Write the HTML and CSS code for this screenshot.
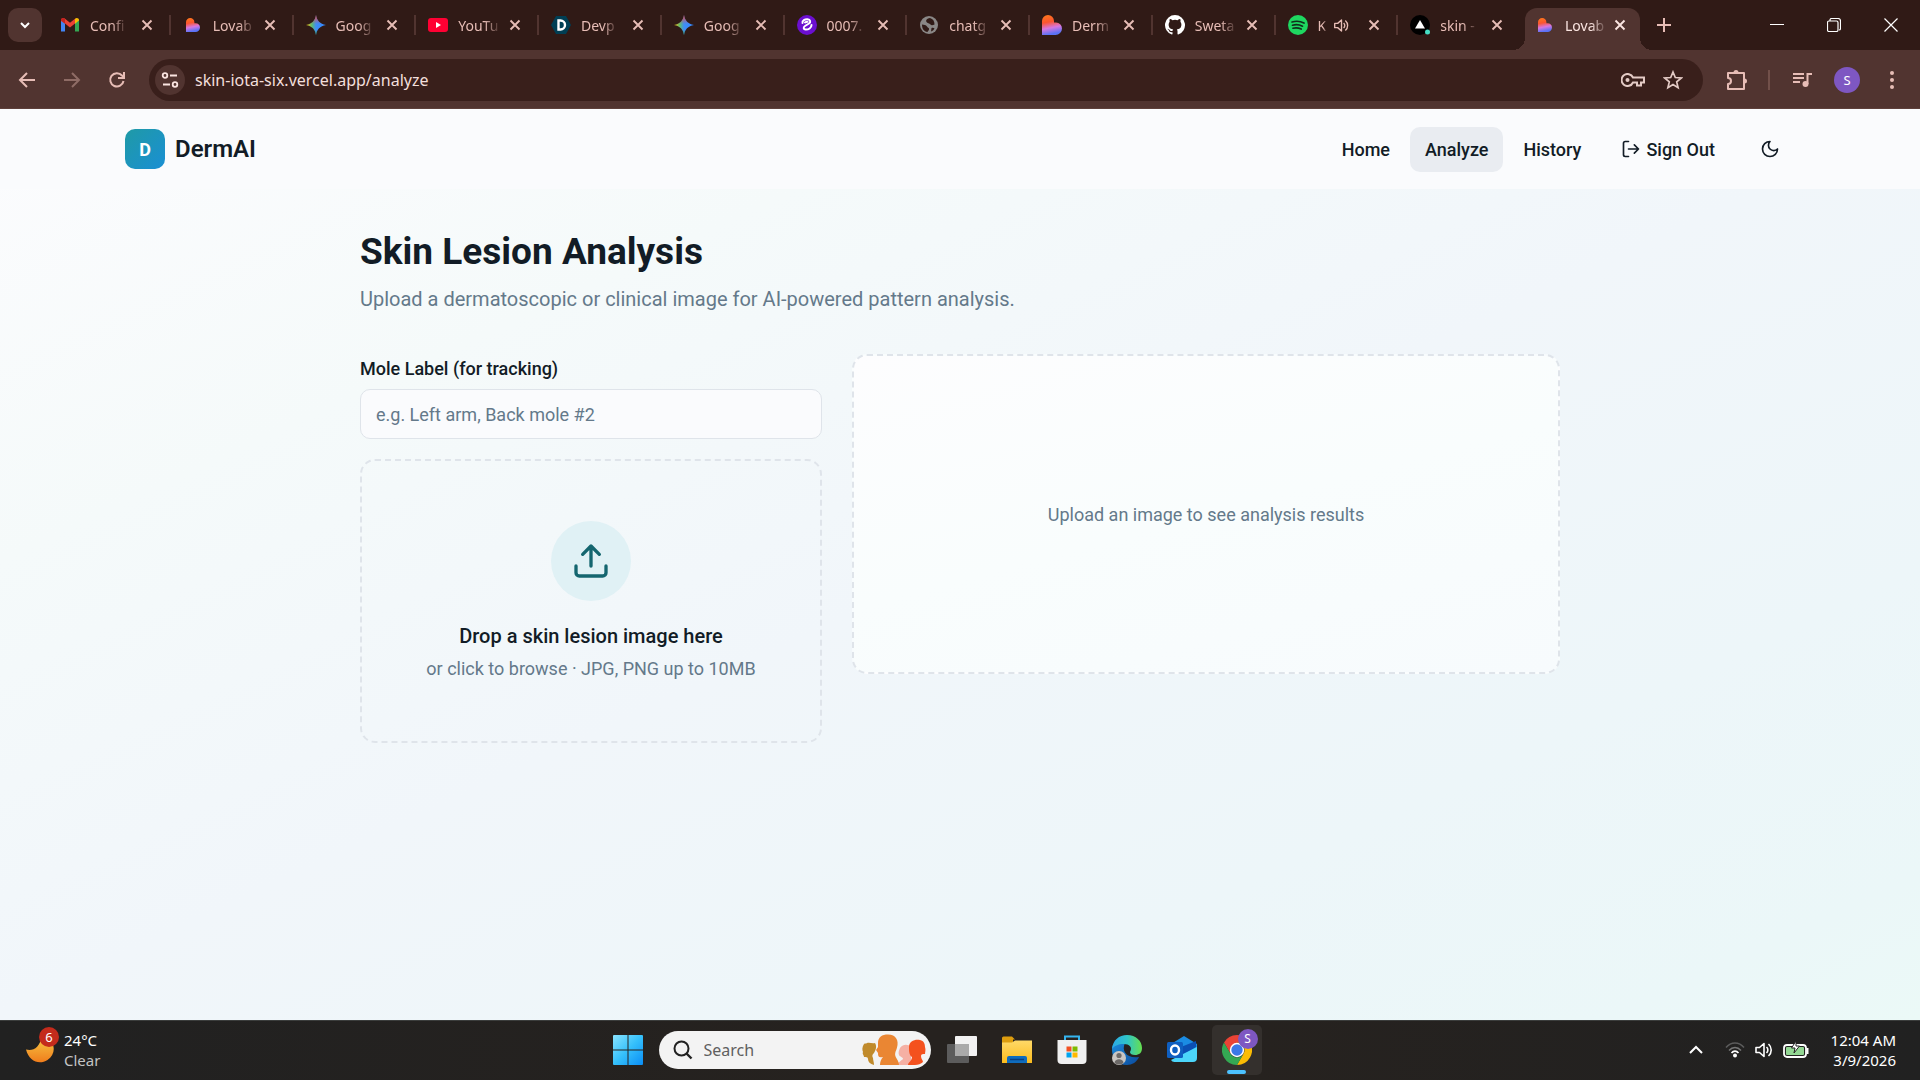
FILE: index.html
```html
<!DOCTYPE html>
<html lang="en">
<head>
  <meta charset="UTF-8" />
  <meta name="viewport" content="width=device-width, initial-scale=1.0"/>
  <title>DermAI - Skin Lesion Analysis</title>
  <link rel="stylesheet" href="styles.css">
</head>
<body>
  <!-- shared icon shapes -->
  <svg class="defs" aria-hidden="true">
    <defs>
      <linearGradient id="heartFill" x1="0" y1="0" x2="0.2" y2="1">
        <stop offset="0" stop-color="#ff7a1a"/><stop offset="0.4" stop-color="#fb5530"/><stop offset="0.7" stop-color="#d777e0"/><stop offset="1" stop-color="#5a72f5"/>
      </linearGradient>
      <linearGradient id="starFill" x1="0" y1="0.5" x2="1" y2="0.5">
        <stop offset="0" stop-color="#fbbc04"/><stop offset="0.3" stop-color="#5bb974"/><stop offset="0.5" stop-color="#3f8df5"/><stop offset="1" stop-color="#3186ff"/>
      </linearGradient>
      <linearGradient id="starTop" x1="0" y1="0" x2="0" y2="1">
        <stop offset="0" stop-color="#f0433b"/><stop offset="0.45" stop-color="#f0433b" stop-opacity="0"/><stop offset="0.75" stop-color="#34a853" stop-opacity="0"/><stop offset="1" stop-color="#34a853"/>
      </linearGradient>
      <linearGradient id="winFill" x1="0" y1="0" x2="1" y2="1">
        <stop offset="0" stop-color="#8ae4ff"/><stop offset="0.5" stop-color="#35c0fb"/><stop offset="1" stop-color="#0a8df5"/>
      </linearGradient>
      <linearGradient id="moonFill" x1="0" y1="0" x2="0" y2="1">
        <stop offset="0" stop-color="#f6c945"/><stop offset="1" stop-color="#f07d1c"/>
      </linearGradient>
      <linearGradient id="folderFill" x1="0" y1="0" x2="0" y2="1">
        <stop offset="0" stop-color="#ffd968"/><stop offset="1" stop-color="#fcbc1d"/>
      </linearGradient>
      <linearGradient id="edgeTop" x1="0" y1="0" x2="1" y2="0">
        <stop offset="0" stop-color="#2ba8e8"/><stop offset="0.5" stop-color="#2fc5c9"/><stop offset="1" stop-color="#66e04e"/>
      </linearGradient>
      <linearGradient id="edgeLow" x1="0" y1="0" x2="1" y2="1">
        <stop offset="0" stop-color="#1c8ede"/><stop offset="1" stop-color="#0b4a9c"/>
      </linearGradient>
      <symbol id="heart" viewBox="0 0 20 20"><path fill="url(#heartFill)" d="M0 6a6 6 0 0 1 12 0v1.500h2A6 6 0 0 1 20 13.500 6.500 6.500 0 0 1 13.500 20H0z"/></symbol>
      <symbol id="star4" viewBox="0 0 20 20">
        <path fill="url(#starFill)" d="M10 0c.8 5.500 4 9 10 10-6 1-9.200 4.500-10 10-.8-5.500-4-9-10-10 6-1 9.200-4.500 10-10z"/>
        <path fill="url(#starTop)" d="M10 0c.8 5.500 4 9 10 10-6 1-9.200 4.500-10 10-.8-5.500-4-9-10-10 6-1 9.200-4.500 10-10z"/>
      </symbol>
      <symbol id="close" viewBox="0 0 12 12"><path d="M1.500 1.500l9 9m0-9l-9 9" fill="none" stroke="currentColor" stroke-width="1.900"/></symbol>
      <symbol id="speaker" viewBox="0 0 20 20"><path d="M2 7.500h3.500L10 3.500v13L5.500 12.500H2zM12.500 7a4 4 0 0 1 0 6M14.500 4a8 8 0 0 1 0 12" fill="none" stroke="currentColor" stroke-width="1.600" stroke-linejoin="round"/></symbol>
    </defs>
  </svg>

  <div class="tabstrip">
    <button class="tab-search" aria-label="Search tabs"><svg viewBox="0 0 12 12" width="12" height="12"><path d="M2 4l4 4 4-4" fill="none" stroke="currentColor" stroke-width="2"/></svg></button>
    <div class="tabs">
      <div class="tab">
        <svg class="favicon" viewBox="0 0 20 20"><path fill="#4285f4" d="M1 4v12.500h4V8z"/><path fill="#34a853" d="M19 4v12.500h-4V8z"/><path fill="#ea4335" d="M1 5.500C1 3 3.500 2.500 5 3.700l5 4 5-4v4.800l-5 4-5-4L1 6z"/><path fill="#fbbc04" d="M15 3.700c1.500-1.200 4-.7 4 1.800l-4 3.200z"/><path fill="#c5221f" d="M1 5.500C1 3 3.500 2.500 5 3.700v5L1 5.500z"/></svg>
        <span class="tab-title">Confi</span><button class="tab-close" aria-label="Close tab"><svg><use href="#close"/></svg></button>
      </div>
      <div class="tab">
        <svg class="favicon small"><use href="#heart"/></svg>
        <span class="tab-title">Lovab</span><button class="tab-close" aria-label="Close tab"><svg><use href="#close"/></svg></button>
      </div>
      <div class="tab">
        <svg class="favicon"><use href="#star4"/></svg>
        <span class="tab-title">Goog</span><button class="tab-close" aria-label="Close tab"><svg><use href="#close"/></svg></button>
      </div>
      <div class="tab">
        <svg class="favicon" viewBox="0 0 20 20"><rect y="3" width="20" height="14" rx="3" fill="#ff0033"/><path fill="#fff" d="M8 7l5 3-5 3z"/></svg>
        <span class="tab-title">YouTu</span><button class="tab-close" aria-label="Close tab"><svg><use href="#close"/></svg></button>
      </div>
      <div class="tab">
        <svg class="favicon" viewBox="0 0 20 20"><path fill="#003e54" d="M5 1h10l5 9-5 9H5l-5-9z"/><path d="M7.500 5.500h2a4.500 4.500 0 0 1 0 9h-2z" fill="none" stroke="#fff" stroke-width="2.400"/></svg>
        <span class="tab-title">Devp</span><button class="tab-close" aria-label="Close tab"><svg><use href="#close"/></svg></button>
      </div>
      <div class="tab">
        <svg class="favicon"><use href="#star4"/></svg>
        <span class="tab-title">Goog</span><button class="tab-close" aria-label="Close tab"><svg><use href="#close"/></svg></button>
      </div>
      <div class="tab">
        <svg class="favicon" viewBox="0 0 20 20"><circle cx="10" cy="10" r="10" fill="#6b0fd0"/><path d="M5.500 8C5 5.500 8 4 10.500 4.200c3 .3 3.500 3 1.500 4.300L8 11c-2 1.300-1.500 3.500.5 3.500 3 .2 6-1.500 6-4.500M8 7.500c1-.8 2.500-.8 2.500-.8" fill="none" stroke="#fff" stroke-width="2" stroke-linecap="round"/></svg>
        <span class="tab-title">0007.</span><button class="tab-close" aria-label="Close tab"><svg><use href="#close"/></svg></button>
      </div>
      <div class="tab">
        <svg class="favicon" viewBox="0 0 20 20"><circle cx="10" cy="10" r="9" fill="#8a8786"/><path fill="#301a16" d="M11 3c-3 .5-4.500 2-3.500 4 .8 1.500 3 1 4 2.500 1 1.200 2.500.5 4 0C15.500 6 14 4 11 3zM3 9.500c2 .2 4 .5 5 2s2.500 1.500 2 3c-.3 1-1 1.500-1.500 2.500C5 16.500 3 14 3 9.500zM12.500 13c1.500-.5 2.500 0 3 .5-.8 1.500-2 2.500-3.500 3z"/></svg>
        <span class="tab-title">chatg</span><button class="tab-close" aria-label="Close tab"><svg><use href="#close"/></svg></button>
      </div>
      <div class="tab">
        <svg class="favicon"><use href="#heart"/></svg>
        <span class="tab-title">Derm</span><button class="tab-close" aria-label="Close tab"><svg><use href="#close"/></svg></button>
      </div>
      <div class="tab">
        <svg class="favicon" viewBox="0 0 16 16"><path fill="#fff" d="M8 0a8 8 0 0 0-2.530 15.590c.400.070.550-.170.550-.380v-1.500c-2.230.490-2.690-.950-2.690-.950-.360-.920-.890-1.170-.890-1.170-.730-.500.050-.490.050-.490.810.060 1.230.830 1.230.830.720 1.230 1.880.870 2.340.660.070-.520.280-.870.500-1.070-1.770-.200-3.640-.890-3.640-3.950 0-.870.310-1.590.830-2.150-.090-.200-.360-1.020.070-2.120 0 0 .670-.210 2.200.820a7.600 7.600 0 0 1 4 0c1.530-1.040 2.200-.820 2.200-.820.430 1.100.160 1.920.080 2.120.510.560.820 1.270.820 2.150 0 3.070-1.870 3.750-3.650 3.950.290.250.540.730.540 1.480v2.200c0 .210.150.460.550.380A8 8 0 0 0 8 0z"/></svg>
        <span class="tab-title">Sweta</span><button class="tab-close" aria-label="Close tab"><svg><use href="#close"/></svg></button>
      </div>
      <div class="tab">
        <svg class="favicon" viewBox="0 0 20 20"><circle cx="10" cy="10" r="10" fill="#1ed760"/><path d="M4 7c4-1.200 8.500-.8 12 1M4.500 10.200c3.500-1 7-.6 10 1M5 13.200c3-.8 5.500-.5 8.200.9" fill="none" stroke="#10301c" stroke-width="1.700" stroke-linecap="round"/></svg>
        <span class="tab-title">K</span><svg class="tab-audio"><use href="#speaker"/></svg><button class="tab-close" aria-label="Close tab"><svg><use href="#close"/></svg></button>
      </div>
      <div class="tab">
        <svg class="favicon" viewBox="0 0 20 20"><circle cx="10" cy="10" r="10" fill="#000"/><path fill="#fff" d="M10 5l5 8.500H5z"/><circle cx="17.500" cy="17" r="2.500" fill="#45dec4"/></svg>
        <span class="tab-title">skin -</span><button class="tab-close" aria-label="Close tab"><svg><use href="#close"/></svg></button>
      </div>
      <div class="tab active">
        <svg class="favicon small"><use href="#heart"/></svg>
        <span class="tab-title">Lovab</span><button class="tab-close" aria-label="Close tab"><svg><use href="#close"/></svg></button>
      </div>
    </div>
    <button class="new-tab" aria-label="New tab"><svg viewBox="0 0 14 14" width="14" height="14"><path d="M7 0v14M0 7h14" stroke="currentColor" stroke-width="2"/></svg></button>
    <div class="window-controls">
      <button aria-label="Minimize"><svg viewBox="0 0 14 14" width="14" height="14"><path d="M0 6.500h14" stroke="currentColor"/></svg></button>
      <button aria-label="Restore"><svg viewBox="0 0 14 14" width="14" height="14"><path d="M3 3V2a1.500 1.500 0 0 1 1.500-1.500H11A2.500 2.500 0 0 1 13.500 3v7.500A1.500 1.500 0 0 1 12 12M2 3h7.500a1.500 1.500 0 0 1 1.500 1.500V12a1.500 1.500 0 0 1-1.500 1.500H2A1.500 1.500 0 0 1 .500 12V4.500A1.500 1.500 0 0 1 2 3z" fill="none" stroke="currentColor" stroke-width="1.200"/></svg></button>
      <button aria-label="Close"><svg viewBox="0 0 14 14" width="14" height="14"><path d="M.500.500l13 13m0-13l-13 13" stroke="currentColor" stroke-width="1.200"/></svg></button>
    </div>
  </div>

  <div class="toolbar">
    <button class="tool" aria-label="Back"><svg viewBox="0 0 20 20" width="20" height="20"><path d="M18 10H3m7-7l-7 7 7 7" fill="none" stroke="currentColor" stroke-width="2"/></svg></button>
    <button class="tool" aria-label="Forward" disabled><svg viewBox="0 0 20 20" width="20" height="20"><path d="M2 10h15m-7-7l7 7-7 7" fill="none" stroke="currentColor" stroke-width="2"/></svg></button>
    <button class="tool" aria-label="Reload"><svg viewBox="0 0 20 20" width="20" height="20"><path d="M16.500 11A6.700 6.700 0 1 1 15 5.500L16.500 7M17 2v6h-6" fill="none" stroke="currentColor" stroke-width="2"/></svg></button>
    <div class="omnibox">
      <button class="site-info" aria-label="Site information"><svg viewBox="0 0 18 18" width="18" height="18"><path d="M9 4.500h7M2 13.500h7" stroke="currentColor" stroke-width="2"/><circle cx="4" cy="4.500" r="2.300" fill="none" stroke="currentColor" stroke-width="1.800"/><circle cx="14" cy="13.500" r="2.300" fill="none" stroke="currentColor" stroke-width="1.800"/></svg></button>
      <input type="text" aria-label="Address" value="skin-iota-six.vercel.app/analyze">
      <button class="tool" aria-label="Passwords"><svg viewBox="0 0 24 14" width="24" height="14"><path d="M12 4.500h11v5h-3v3h-4v-3h-4a6 6 0 1 1 0-5z" fill="none" stroke="currentColor" stroke-width="2"/><circle cx="6.500" cy="7" r="2" fill="currentColor"/></svg></button>
      <button class="tool" aria-label="Bookmark"><svg viewBox="0 0 20 20" width="20" height="20"><path d="M10 2l2.300 5.500 6 .5-4.600 3.900 1.400 5.800L10 14.600l-5.100 3.100 1.400-5.800L1.700 8l6-.5z" fill="none" stroke="currentColor" stroke-width="1.700"/></svg></button>
    </div>
    <button class="tool" aria-label="Extensions"><svg viewBox="0 0 22 22" width="22" height="22"><path fill="none" stroke="currentColor" stroke-width="2" stroke-linejoin="round" d="M2 4h16v16H2v-5a3 3 0 0 0 0-6z"/><path fill="currentColor" d="M7.500 3.500a2.500 2.500 0 0 1 5 0zM18.500 9.500a2.500 2.500 0 0 1 0 5z"/></svg></button>
    <span class="tool-divider"></span>
    <button class="tool" aria-label="Media controls"><svg viewBox="0 0 20 20" width="20" height="20"><path d="M1 4h11M1 8h11M1 12h7M15.500 14V4H20" fill="none" stroke="currentColor" stroke-width="2"/><circle cx="13.500" cy="14" r="3" fill="currentColor"/></svg></button>
    <button class="profile" aria-label="Profile">S</button>
    <button class="tool" aria-label="Menu"><svg viewBox="0 0 20 20" width="20" height="20"><g fill="currentColor"><circle cx="10" cy="3" r="2"/><circle cx="10" cy="10" r="2"/><circle cx="10" cy="17" r="2"/></g></svg></button>
  </div>

  <div class="page">
    <header class="site-header">
      <div class="header-inner">
        <a class="brand" href="#"><span class="brand-logo">D</span>DermAI</a>
        <nav class="site-nav">
          <a class="nav-link" href="#">Home</a>
          <a class="nav-link current" href="#">Analyze</a>
          <a class="nav-link" href="#">History</a>
          <button class="nav-link sign-out"><svg class="line-icon" viewBox="0 0 24 24" width="20" height="20"><path d="M9 21H5a2 2 0 0 1-2-2V5a2 2 0 0 1 2-2h4M16 17l5-5-5-5M21 12H9"/></svg>Sign Out</button>
          <button class="theme-toggle" aria-label="Toggle theme"><svg class="line-icon" viewBox="0 0 24 24" width="20" height="20"><path d="M12 3a6 6 0 0 0 9 9 9 9 0 1 1-9-9z"/></svg></button>
        </nav>
      </div>
    </header>

    <main class="content">
      <h1>Skin Lesion Analysis</h1>
      <p class="lead">Upload a dermatoscopic or clinical image for AI-powered pattern analysis.</p>
      <div class="columns">
        <form class="upload-form">
          <label class="field-label" for="moleLabel">Mole Label (for tracking)</label>
          <input class="text-input" type="text" id="moleLabel" placeholder="e.g. Left arm, Back mole #2">
          <label class="dropzone">
            <input class="file-input" type="file" accept="image/*">
            <span class="drop-icon"><svg class="line-icon" viewBox="0 0 24 24" width="40" height="40"><path d="M21 15v4a2 2 0 0 1-2 2H5a2 2 0 0 1-2-2v-4M17 8l-5-5-5 5M12 3v12"/></svg></span>
            <span class="drop-title">Drop a skin lesion image here</span>
            <span class="drop-hint">or click to browse · JPG, PNG up to 10MB</span>
          </label>
        </form>
        <section class="results">Upload an image to see analysis results</section>
      </div>
    </main>
  </div>

  <footer class="taskbar">
    <button class="weather">
      <span class="weather-icon">
        <svg viewBox="0 0 28 28" width="28" height="28"><path fill="url(#moonFill)" d="M0 13.500c7 2 14-2 15.500-13 14 2 16 17 6 23.500C13 29.500 3 25 0 13.500z"/></svg>
        <span class="weather-badge">6</span>
      </span>
      <span class="weather-text"><span>24°C</span><span class="dim">Clear</span></span>
    </button>
    <div class="task-icons">
      <button aria-label="Start"><svg viewBox="0 0 30 30" width="30" height="30"><path fill="url(#winFill)" d="M1 0h13.500v14.500H0V1a1 1 0 0 1 1-1zM15.500 0H29a1 1 0 0 1 1 1v13.500H15.500zM0 15.500h14.500V30H1a1 1 0 0 1-1-1zM15.500 15.500H30V29a1 1 0 0 1-1 1H15.500z"/></svg></button>
      <label class="task-search">
        <svg viewBox="0 0 20 20" width="20" height="20"><circle cx="8.500" cy="8.500" r="7" fill="none" stroke="#222" stroke-width="2"/><path d="M13.500 13.500l5 5" stroke="#222" stroke-width="2.400"/></svg>
        <input type="text" placeholder="Search" aria-label="Search">
        <svg viewBox="0 0 64 32" width="64" height="32">
          <path fill="#c08a2b" d="M2 10c1-1 2 0 3-1 3-1 5 1 8 0 2 3 1 7-1 10-2 2-2 3-1 5 0 2 1 4 1 7-4-1-6-3-6-6 0-2-2-2-4-2 0-2-2-3-1-5-1-2-1-5 1-8z"/>
          <path fill="#f5b0a4" d="M38 14c3-4 8-4 11-1v18H36c0-3 3-4 5-6 0-2-3-2-4-4-1-2 0-5 1-7z"/>
          <path fill="#ea8633" d="M16 9C16 3 20 .500 26 .500c8 0 11 6 9 13-1 4-3 6-1 10 1 2 3 4 3 7.500H18c0-3 1-6 3-8-4 1-5 0-5-4l-2-3 2-3z"/>
          <path fill="#f4511e" d="M47 13c0-6 6-8 11-7 4 1 5 4 5 7 1 3 0 5 0 7-2 0-4 0-4 2 0 3 2 4 2 6-2 2-5 3-8 3h-7c0-3 4-4 4-8-3-2-3-6-3-10z"/>
        </svg>
      </label>
      <button aria-label="Task view"><svg viewBox="0 0 30 30" width="30" height="30"><rect x="8" y="1" width="22" height="20" rx="1" fill="#f2f2f2"/><rect y="9" width="22" height="19" rx="1" fill="#5c5c5c"/><rect x="8" y="9" width="14" height="12" fill="#aaa"/></svg></button>
      <button aria-label="File Explorer"><svg viewBox="0 0 30 30" width="30" height="30"><path fill="#dd9d0e" d="M0 3a1.500 1.500 0 0 1 1.500-1.500H10l3 3h-2V9H0z"/><path fill="url(#folderFill)" d="M0 7.500h10l3-2h17V28H0z"/><path fill="#0f6cbd" d="M5 28v-5a2 2 0 0 1 2-2h16a2 2 0 0 1 2 2v5z"/><path stroke="#0a3f80" stroke-width="1.500" d="M8 24.500h14"/></svg></button>
      <button aria-label="Microsoft Store"><svg viewBox="0 0 30 30" width="30" height="30"><path d="M8 6V1.500h14V6" fill="none" stroke="#35b5f0" stroke-width="2"/><path fill="#f0f0f0" d="M.500 5h29v20a4 4 0 0 1-4 4h-21a4 4 0 0 1-4-4z"/><path fill="#f25022" d="M9.500 11.500h5v5h-5z"/><path fill="#7fba00" d="M15.500 11.500h5v5h-5z"/><path fill="#00a4ef" d="M9.500 17.500h5v5h-5z"/><path fill="#ffb900" d="M15.500 17.500h5v5h-5z"/></svg></button>
      <button aria-label="Microsoft Edge"><svg viewBox="0 0 30 30" width="30" height="30"><path fill="url(#edgeLow)" d="M0 15C0 6 8 4 13 8c-4 8 2 16 14 14-2 5-7 8-12 8C6 30 0 23 0 15z"/><path fill="url(#edgeTop)" d="M0 14C1 5 7 0 15 0c9 0 15 6 15 13 0 5-3 7-7 7-3 0-5-1-5-3 3-5-1-8-6-8C6 9 2 11 0 14z"/><circle cx="7" cy="23" r="7" fill="#c9c6c3"/><circle cx="7" cy="20.500" r="2.600" fill="#6d6a68"/><path fill="#6d6a68" d="M2.500 28c0-5 9-5 9 0-3 2-6 2-9 0z"/></svg></button>
      <button aria-label="Outlook"><svg viewBox="0 0 30 30" width="30" height="30"><path fill="#1b8ce3" d="M4 9L17 1l13 8v14H4z"/><path fill="#0b4fb3" d="M14 12l15-6v6l-13 8z"/><path fill="#4cd6fa" d="M4 25l26-13v11a4 4 0 0 1-4 4H8a4 4 0 0 1-4-2z"/><rect y="7" width="16" height="16" rx="1.500" fill="#0f5fc0"/><ellipse cx="8" cy="15" rx="4" ry="4.500" fill="none" stroke="#fff" stroke-width="2.400"/></svg></button>
      <button class="running" aria-label="Google Chrome">
        <svg viewBox="0 0 30 30" width="30" height="30"><path fill="#ea4335" d="M15 0a15 15 0 0 1 13 7.500H15L8.500 18.800 2 7.500A15 15 0 0 1 15 0z"/><path fill="#fbbc04" d="M28 7.500A15 15 0 0 1 15 30l6.500-11.200a7.500 7.500 0 0 0 0-7.500L15 7.500z"/><path fill="#34a853" d="M2 7.500l6.500 11.300a7.500 7.500 0 0 0 13 0L15 30A15 15 0 0 1 2 7.500z"/><circle cx="15" cy="15" r="7.200" fill="#fff"/><circle cx="15" cy="15" r="5.700" fill="#3b78e7"/></svg>
        <span class="task-badge">S</span>
      </button>
    </div>
    <div class="tray">
      <button aria-label="Show hidden icons"><svg viewBox="0 0 14 14" width="14" height="14"><path d="M1 10l6-6 6 6" fill="none" stroke="currentColor" stroke-width="2"/></svg></button>
      <button class="tray-status" aria-label="Network, volume and battery">
        <svg viewBox="0 0 20 16" width="20" height="16"><path d="M1 5.500c5-6 13-6 18 0" fill="none" stroke="#5c5c5c" stroke-width="1.500"/><path d="M4 8.500c3.500-4 8.500-4 12 0" fill="none" stroke="#777" stroke-width="1.500"/><path d="M6.500 11c2-2.500 5-2.500 7 0" fill="none" stroke="#fff" stroke-width="1.600"/><circle cx="10" cy="13.500" r="2" fill="#fff"/></svg>
        <svg width="20" height="20"><use href="#speaker"/></svg>
        <svg viewBox="0 0 26 18" width="26" height="18"><rect x="1" y="4" width="22" height="12" rx="3" fill="none" stroke="#fff" stroke-width="1.800"/><rect x="3" y="6" width="18" height="8" rx="1" fill="#93d793"/><path d="M24.500 7v6" stroke="#fff" stroke-width="2"/><path fill="#fff" stroke="#222" stroke-width="1" d="M13 0L8.500 7H12L11 12l5.500-7H13z"/></svg>
      </button>
      <button class="clock"><span>12:04 AM</span><span>3/9/2026</span></button>
    </div>
  </footer>
</body>
</html>
```

FILE: styles.css
```css
* {
  box-sizing: border-box;
}
body {
  margin: 0;
  height: 100vh;
  display: flex;
  flex-direction: column;
  overflow: hidden;
  font-family: Roboto, "Liberation Sans", sans-serif;
  color: #121c26;
}
button {
  border: 0;
  padding: 0;
  background: none;
  color: inherit;
  font: inherit;
  display: flex;
  align-items: center;
  justify-content: center;
}
a {
  color: inherit;
  text-decoration: none;
}
svg {
  flex: none;
}
.defs {
  position: absolute;
  width: 0;
  height: 0;
}

/* browser tabs */
.tabstrip,
.toolbar,
.taskbar {
  font-family: "Noto Sans", "Open Sans", sans-serif;
  flex: none;
}
.tabstrip {
  display: flex;
  align-items: flex-start;
  height: 50px;
  padding: 8px 0 0 8px;
  background: #301a16;
  color: #e7bdb6;
}
.tab-search {
  width: 34px;
  height: 34px;
  border-radius: 10px;
  background: #513430;
  color: #fff;
}
.tabs {
  display: flex;
  flex: 1;
  height: 42px;
  margin-left: 6px;
}
.tab {
  flex: 1;
  min-width: 0;
  position: relative;
  display: flex;
  align-items: center;
  height: 34px;
  padding: 0 18px 0 12px;
  font-size: 14px;
}
.tab::after {
  content: "";
  position: absolute;
  right: 0;
  top: 7px;
  width: 2px;
  height: 20px;
  background: #513430;
}
.tab:nth-last-child(-n+2)::after {
  display: none;
}
.favicon {
  width: 20px;
  height: 20px;
}
.favicon.small {
  width: 14px;
  height: 14px;
  margin: 0 3px;
}
.tab-title {
  margin-left: 10px;
  white-space: nowrap;
  -webkit-mask-image: linear-gradient(90deg, #000 65%, rgba(0,0,0,0.2));
  mask-image: linear-gradient(90deg, #000 65%, rgba(0,0,0,0.2));
}
.tab-audio {
  width: 17px;
  height: 17px;
  margin-left: 7px;
}
.tab-close {
  margin-left: auto;
}
.tab-close svg {
  width: 12px;
  height: 12px;
}
.tab.active {
  flex: 0 0 115px;
  height: 42px;
  margin-left: 4px;
  padding: 0 14px 8px 10px;
  border-radius: 12px 12px 0 0;
  background: #513430;
  color: #fbe5e1;
}
/* curved feet of the open tab */
.tab.active::before,
.tab.active::after {
  content: "";
  display: block;
  position: absolute;
  top: auto;
  bottom: 0;
  width: 12px;
  height: 12px;
  background: radial-gradient(circle at 0 0, transparent 12px, #513430 12px);
}
.tab.active::before {
  left: -12px;
}
.tab.active::after {
  right: -12px;
  background: radial-gradient(circle at 100% 0, transparent 12px, #513430 12px);
}
.new-tab {
  width: 48px;
  height: 34px;
}
.window-controls {
  display: flex;
  margin-left: 60px;
  padding-right: 1px;
  color: #fff;
}
.window-controls button {
  width: 57px;
  height: 34px;
}

/* address bar */
.toolbar {
  display: flex;
  align-items: center;
  height: 59px;
  padding: 0 10px 0 9px;
  background: #513430;
  color: #e7bdb6;
  box-shadow: inset 0 -1px #5e403b;
}
.tool {
  width: 36px;
  height: 36px;
  margin-right: 9px;
}
.tool:disabled {
  color: #8f6c66;
}
.omnibox {
  flex: 1;
  display: flex;
  align-items: center;
  height: 42px;
  margin: 0 16px 0 5px;
  padding: 0 8px 0 6px;
  border-radius: 21px;
  background: #391f1b;
}
.omnibox input {
  flex: 1;
  margin-left: 8px;
  border: 0;
  background: none;
  color: #f3dfdb;
  font: inherit;
  font-size: 16px;
  outline: none;
}
.omnibox .tool {
  margin-right: 4px;
  color: #e3cac5;
}
.site-info {
  width: 30px;
  height: 30px;
  border-radius: 50%;
  background: #513430;
  color: #fbe5e1;
}
.tool-divider {
  width: 2px;
  height: 20px;
  margin: 0 14px 0 4px;
  background: #72504a;
}
.profile {
  width: 26px;
  height: 26px;
  margin: 0 14px 0 5px;
  border-radius: 50%;
  background: #7e57c2;
  color: #fff;
  font-size: 13px;
}
.toolbar > .tool:last-child {
  margin-right: 0;
}

/* page */
.page {
  flex: 1;
  min-height: 0;
  background: linear-gradient(155deg, #fcfcfe 0%, #f5fafa 25%, #f1f6fa 50%, #edf6f9 75%, #ebf7f8 92%, #ebf9f7 100%);
}
.site-header {
  background: #fafbfd;
}
.header-inner {
  display: flex;
  align-items: center;
  justify-content: space-between;
  max-width: 1750px;
  height: 80px;
  margin: 0 auto;
  padding: 0 40px;
}
.brand {
  display: flex;
  align-items: center;
  gap: 10px;
  font-size: 24px;
  font-weight: 600;
}
.brand-logo {
  display: grid;
  place-items: center;
  width: 40px;
  height: 40px;
  border-radius: 10px;
  background: linear-gradient(135deg, #1f9aa6, #1a8fd4);
  color: #fff;
  font-size: 18px;
  font-weight: 700;
}
.site-nav {
  display: flex;
  align-items: center;
  gap: 5px;
}
.nav-link {
  display: flex;
  align-items: center;
  gap: 5px;
  height: 45px;
  padding: 0 15px;
  border-radius: 10px;
  font-size: 18px;
  font-weight: 500;
}
.nav-link.current {
  background: #e9ecf1;
}
.sign-out {
  margin: 0 10px 0 5px;
}
.theme-toggle {
  width: 50px;
  height: 50px;
}
.line-icon {
  fill: none;
  stroke: currentColor;
  stroke-width: 2;
  stroke-linecap: round;
  stroke-linejoin: round;
}
.content {
  max-width: 1200px;
  margin: 0 auto;
  padding-top: 40px;
}
h1 {
  margin: 0;
  font-size: 37px;
  line-height: 45px;
  font-weight: 700;
}
.lead {
  margin: 10px 0 40px;
  font-size: 20px;
  line-height: 30px;
  color: #64798a;
}
.columns {
  display: grid;
  grid-template-columns: repeat(5, 1fr);
  gap: 30px;
  align-items: start;
}
.upload-form {
  grid-column: span 2;
  display: flex;
  flex-direction: column;
}
.field-label {
  margin-bottom: 5px;
  font-size: 18px;
  line-height: 30px;
  font-weight: 500;
}
.text-input {
  height: 50px;
  padding: 0 15px;
  border: 1px solid #dfe4ea;
  border-radius: 10px;
  background: #fafbfd;
  font: inherit;
  font-size: 18px;
}
.text-input::placeholder {
  color: #64798a;
}
.dropzone {
  display: flex;
  flex-direction: column;
  align-items: center;
  margin-top: 20px;
  padding: 60px 0;
  border: 2px dashed #dfe4ea;
  border-radius: 15px;
}
.file-input {
  position: absolute;
  opacity: 0;
  pointer-events: none;
}
.drop-icon {
  display: grid;
  place-items: center;
  width: 80px;
  height: 80px;
  margin-bottom: 20px;
  border-radius: 50%;
  background: #e0f1f5;
  color: #14666f;
}
.drop-title {
  font-size: 20px;
  line-height: 30px;
  font-weight: 500;
}
.drop-hint {
  margin-top: 5px;
  font-size: 18px;
  line-height: 25px;
  color: #64798a;
}
.results {
  grid-column: span 3;
  display: grid;
  place-items: center;
  height: 320px;
  border: 2px dashed #dfe4ea;
  border-radius: 15px;
  background: linear-gradient(165deg, #fdfdfe, #f9fdfd 50%, #f7fbfd);
  color: #64798a;
  font-size: 18px;
}

/* taskbar */
.taskbar {
  display: grid;
  grid-template-columns: 1fr auto 1fr;
  align-items: center;
  height: 60px;
  padding-bottom: 2px;
  border-top: 1px solid #3b3d3c;
  background: linear-gradient(90deg, #212121, #26221f 45%, #26221f 65%, #212121);
  color: #fff;
  font-size: 15px;
  line-height: 20px;
}
.weather {
  justify-self: start;
  gap: 10px;
  margin-left: 26px;
}
.weather-icon {
  position: relative;
  display: flex;
}
.weather-badge {
  position: absolute;
  top: -9px;
  right: -5px;
  width: 20px;
  height: 20px;
  border-radius: 50%;
  background: #c42b1c;
  font-size: 13px;
}
.weather-text {
  display: flex;
  flex-direction: column;
  align-items: flex-start;
}
.dim {
  color: #c4c4c4;
}
.task-icons {
  display: flex;
  align-items: center;
  gap: 5px;
  margin-right: 56px;
}
.task-icons button {
  position: relative;
  width: 50px;
  height: 50px;
}
.task-search {
  display: flex;
  align-items: center;
  width: 272px;
  height: 38px;
  margin: 0 1px;
  padding: 0 5px 0 14px;
  border-radius: 19px;
  background: #f3f3f3;
}
.task-search input {
  flex: 1;
  min-width: 0;
  margin-left: 11px;
  padding: 0;
  border: 0;
  background: none;
  font: inherit;
  font-size: 16px;
}
.task-search input::placeholder {
  color: #5f5f5f;
}
.task-icons .running {
  border-radius: 5px;
  background: #34302d;
}
.running::after {
  content: "";
  position: absolute;
  bottom: 1px;
  width: 19px;
  height: 4px;
  border-radius: 2px;
  background: #4cc2ff;
}
.task-badge {
  position: absolute;
  top: 4px;
  right: 4px;
  width: 20px;
  height: 20px;
  border-radius: 50%;
  background: #7e57c2;
  font-size: 12px;
}
.tray {
  justify-self: end;
  display: flex;
  align-items: center;
  gap: 22px;
  margin-right: 24px;
}
.tray-status {
  gap: 9px;
}
.clock {
  flex-direction: column;
  align-items: flex-end;
}
```
